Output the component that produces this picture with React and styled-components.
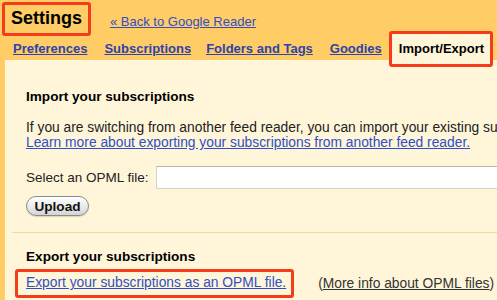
import styled, { createGlobalStyle } from 'styled-components';

const GlobalStyle = createGlobalStyle`
  html, body {
    margin: 0;
    padding: 0;
  }
  body {
    font-family: 'Liberation Sans', Arial, sans-serif;
    background: #ffcc66;
  }
`;

const Page = styled.div`
  width: 497px;
  height: 300px;
  overflow: hidden;
  background: #ffcc66;
  display: flex;
  flex-direction: column;
`;

const Header = styled.div`
  display: flex;
  align-items: center;
  padding: 2px 0 0 2px;
  height: 34px;
  flex-shrink: 0;
`;

const Highlight = styled.div`
  border: 3px solid #f43c1d;
  border-radius: 3px;
  box-sizing: border-box;
`;

const Title = styled(Highlight)`
  width: 89px;
  height: 34px;
  padding-left: 6px;
  font-size: 18px;
  font-weight: bold;
  line-height: 27px;
  color: #000;
`;

const BackLink = styled.a`
  margin: 4px 0 0 19px;
  font-size: 13px;
  color: #2f4fc4;
  text-decoration: underline;
`;

const TabBar = styled.div`
  display: flex;
  height: 29px;
  margin-top: -5px;
  padding-left: 13px;
  flex-shrink: 0;
`;

const Tab = styled.a`
  margin-left: ${p => p.$space}px;
  height: 36px;
  line-height: 36px;
  font-size: 13px;
  font-weight: bold;
  color: #2d43ad;
  text-decoration: underline;
  white-space: nowrap;
`;

const ActiveTab = styled(Highlight)`
  margin-left: ${p => p.$space}px;
  position: relative;
  z-index: 1;
  width: 104px;
  height: 36px;
  padding-left: 7px;
  line-height: 30px;
  background: #fff6da;
  font-size: 13px;
  font-weight: bold;
  color: #000;
  white-space: nowrap;
  flex-shrink: 0;
`;

const Panel = styled.div`
  flex: 1;
  margin-left: 5px;
  background: #fff6da;
  padding: 29px 0 0 7px;
  color: #222;
  font-size: 13.8px;
`;

const Section = styled.div`
  padding-left: ${p => p.$inset || 14}px;
  padding-bottom: 16px;
`;

const Divider = styled.div`
  height: 1px;
  background: #f1d9a3;
  margin-bottom: 16px;
`;

const Heading = styled.div`
  font-size: 13.6px;
  font-weight: bold;
  color: #000;
  line-height: 16px;
  padding-left: ${p => p.$indent || 0}px;
  margin-bottom: ${p => p.$after}px;
`;

const Text = styled.div`
  line-height: 15px;
  white-space: nowrap;
`;

const Link = styled.a`
  color: #2f4fc4;
  text-decoration: underline;
`;

const FileRow = styled.div`
  display: flex;
  align-items: center;
  margin-top: 16px;
  font-size: 13.5px;
  white-space: nowrap;
`;

const FileInput = styled.div`
  margin-left: 7px;
  width: 400px;
  height: 23px;
  box-sizing: border-box;
  background: #fff;
  border: 1px solid #d6d2c6;
  border-top-color: #b9b6ae;
  flex-shrink: 0;
`;

const Button = styled.button`
  margin-top: 7px;
  width: 63px;
  height: 20px;
  padding: 0;
  border: 1px solid #8a8a8a;
  border-radius: 10px;
  background: linear-gradient(#ffffff, #e9e9e9 55%, #d4d4d4);
  box-shadow: 0 1px 1px rgba(0, 0, 0, 0.15);
  font-family: 'Liberation Sans', Arial, sans-serif;
  font-size: 13.6px;
  font-weight: bold;
  color: #111;
`;

const ExportRow = styled.div`
  display: flex;
  align-items: center;
  white-space: nowrap;
`;

const ExportBox = styled(Highlight)`
  height: 29px;
  padding: 0 5px 0 8px;
  line-height: 22px;
  flex-shrink: 0;
`;

const Note = styled.span`
  margin-left: 24px;
  color: #333;
`;

const NoteLink = styled.a`
  color: #333;
  text-decoration: underline;
`;

const tabs = [
  { label: 'Preferences', space: 0 },
  { label: 'Subscriptions', space: 17 },
  { label: 'Folders and Tags', space: 15 },
  { label: 'Goodies', space: 17 },
];

export default function App() {
  return (
    <>
      <GlobalStyle />
      <Page>
        <Header>
          <Title>Settings</Title>
          <BackLink>« Back to Google Reader</BackLink>
        </Header>
        <TabBar>
          {tabs.map(t => (
            <Tab key={t.label} $space={t.space}>{t.label}</Tab>
          ))}
          <ActiveTab $space={7}>Import/Export</ActiveTab>
        </TabBar>
        <Panel>
          <Section>
            <Heading $after={15}>Import your subscriptions</Heading>
            <Text>
              If you are switching from another feed reader, you can import your existing subscriptions.
            </Text>
            <Text>
              <Link>Learn more about exporting your subscriptions from another feed reader.</Link>
            </Text>
            <FileRow>
              Select an OPML file:
              <FileInput />
            </FileRow>
            <Button>Upload</Button>
          </Section>
          <Divider />
          <Section $inset={3}>
            <Heading $after={4} $indent={11}>Export your subscriptions</Heading>
            <ExportRow>
              <ExportBox>
                <Link>Export your subscriptions as an OPML file.</Link>
              </ExportBox>
              <Note>
                (<NoteLink>More info about OPML files</NoteLink>)
              </Note>
            </ExportRow>
          </Section>
        </Panel>
      </Page>
    </>
  );
}
